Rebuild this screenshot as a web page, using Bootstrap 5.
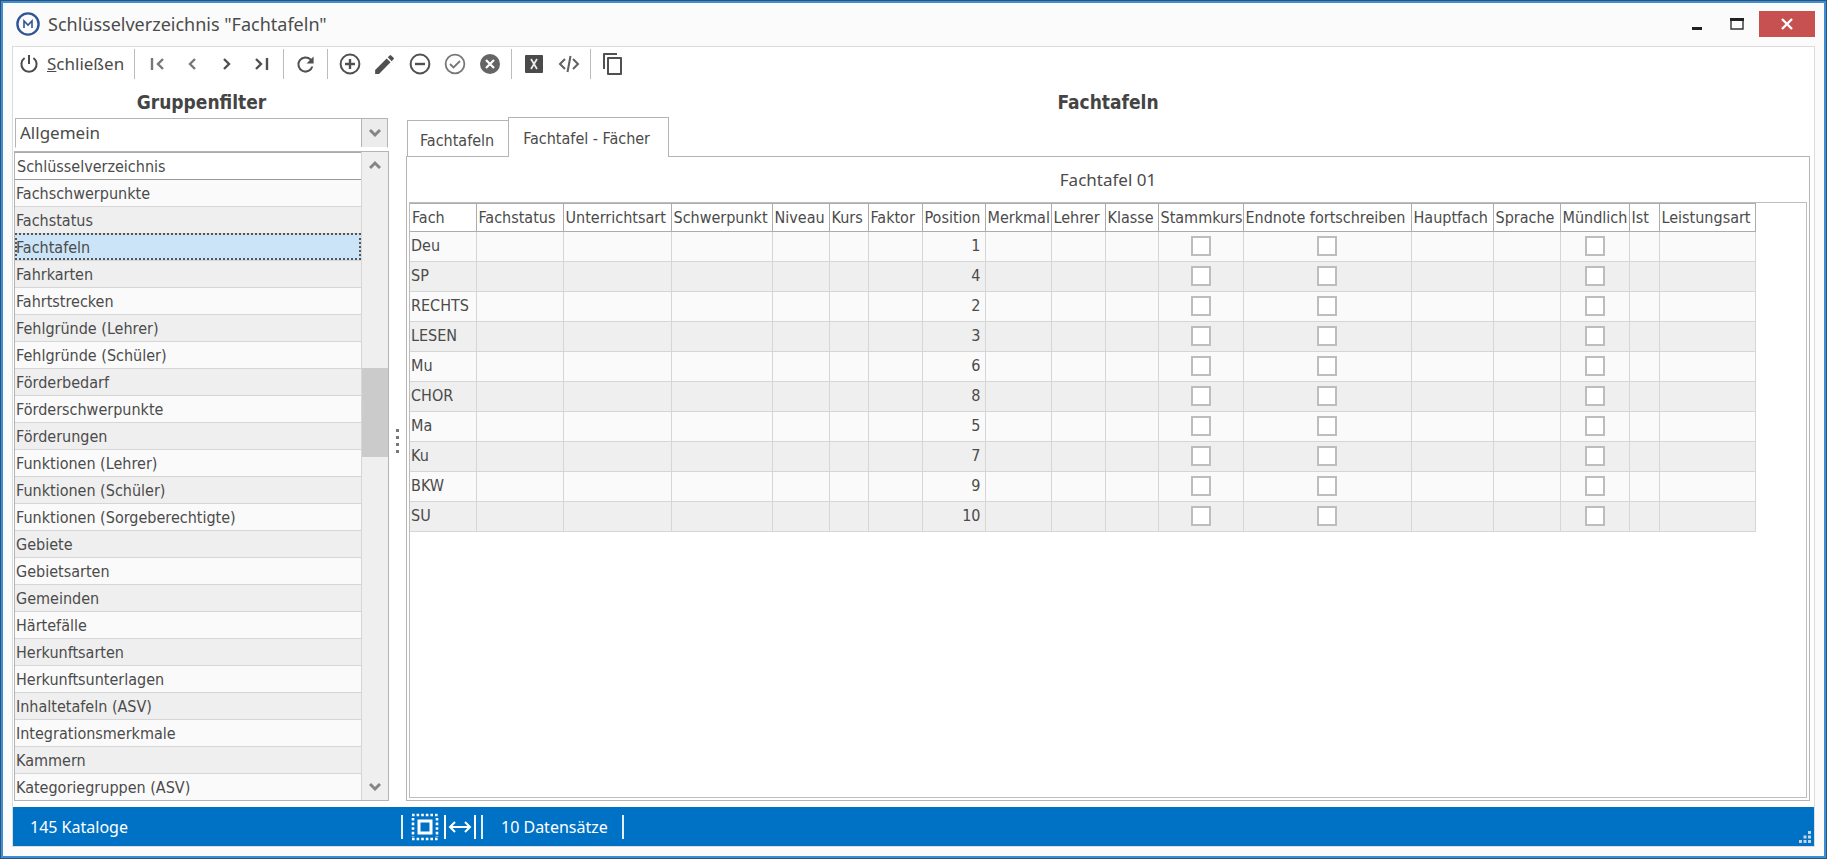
<!DOCTYPE html>
<html lang="de">
<head>
<meta charset="utf-8">
<meta name="viewport" content="width=device-width, initial-scale=1">
<title>Schlüsselverzeichnis "Fachtafeln"</title>
<link href="https://cdn.jsdelivr.net/npm/bootstrap@5.3.0/dist/css/bootstrap.min.css" rel="stylesheet">
<style>
:root{--ui:"Noto Sans","Open Sans",sans-serif;--grid:"DejaVu Sans Condensed","DejaVu Sans",sans-serif;--ink:#4b4b4b;--edge:#b4b4b4;--line:#d6d6d6}
body{font-family:var(--ui);font-size:17px;line-height:24px;color:var(--ink);background:#fbfbfb}
.app-window{border:1px solid #34526b;box-shadow:inset 0 0 0 2px #3a8fdc;padding:0 11px 11px}
.title-bar{height:45px;padding:2px 0 0 4px}
.title-bar h1{font-size:18px;line-height:24px;margin:0 0 0 8px;font-weight:400}
.win-btn{border:0;background:none;width:40px;height:26px;padding:0;display:flex;align-items:center;justify-content:center}
.win-close{background:#c75050;width:56px;margin-left:2px}
.app-body{background:#fff;border:1px solid #dcdcdc;min-height:0}
.tool-bar{height:35px}
.tool-btn{border:0;background:none;width:35px;height:33px;padding:0;display:flex;align-items:center;justify-content:center;color:#505050}
.tool-close{width:auto;padding:0 6px;gap:8px;color:var(--ink)}
.tool-sep{width:1px;height:30px;background:#bcbcbc;margin:0 4px}
.panel-title{font:700 19px/40px var(--grid);text-align:center;margin:0;height:36px;color:#444}
.side-panel{width:376px;flex:none;padding-left:1px}
.combo{height:30px;margin:0 1px;border:1px solid var(--edge);border-bottom-color:#fff;position:relative}
.combo select{width:100%;height:100%;appearance:none;border:0;padding:1px 30px 0 4px;background:#fff;color:var(--ink);font:17px/24px var(--ui)}
.combo .arrow{position:absolute;right:0;top:0;bottom:0;width:26px;border-left:1px solid var(--edge);background:#ececec;pointer-events:none;display:flex;align-items:center;justify-content:center}
.list-frame{border:1px solid var(--edge);margin-top:3px;min-height:0}
.grid{font:16px/20px var(--grid);border-collapse:collapse;color:var(--ink);table-layout:fixed;margin:0}
.grid th{font-weight:400;background:#fff;border:1px solid #acacac;height:28px;padding:2px 0 0 2px;white-space:nowrap;text-align:left}
.grid td{border:1px solid var(--line);padding:0 1px;height:30px;white-space:nowrap;background:#fafafa}
.grid tbody tr:nth-child(even) td{background:#efefef}
.grid tr>*:first-child{border-left:0}
.key-list{width:100%}
.key-list td,.key-list th{height:27px;border-right:0;padding-top:2px}
.key-list th{border-bottom-color:#999}
.key-list tbody tr.chosen td{background:#cce4f7;outline:2px dotted #555;outline-offset:-2px}
.scroll-track{width:27px;flex:none;background:#efefef;border-left:1px solid var(--line)}
.scroll-track button{border:0;background:none;height:26px;padding:0;display:flex;align-items:center;justify-content:center}
.scroll-before{flex:190 0 0}.scroll-thumb{flex:90 0 0;background:#cbcbcb}.scroll-after{flex:317 0 0}
.splitter{width:17px;flex:none}
.splitter i{width:3px;height:3px;background:#777}
.main-panel{min-width:0;padding-right:4px}
.tabs{height:39px;padding-left:1px;margin-bottom:-1px;position:relative}
.tab{font:16px/20px var(--grid);color:var(--ink);background:#fff;border:1px solid var(--edge);height:37px;padding:5px 14px 0 12px}
.tab.on{height:40px;border-bottom:0;margin-left:-1px;padding:3px 18px 0 14px}
.pane{border:1px solid var(--edge);min-height:0;padding:0 2px 2px}
.pane-title{height:45px;line-height:46px;text-align:center}
.grid-frame{border:1px solid #bdbdbd;overflow:hidden}
.grid input{appearance:none;display:block;width:20px;height:20px;border:2px solid #bdbdbd;background:#fff;margin:0 auto;border-radius:0}
.status{background:#0072c6;color:#fff;height:39px;position:relative;margin:6px 0 0;font-size:16px}
.status .bar{width:2px;height:24px;background:#e3effa}
.status .count{width:388px;padding-left:17px}
.status .records{padding:0 14px 0 18px}
.status .grip{position:absolute;right:2px;bottom:2px}
</style>
</head>
<body>
<div class="app-window vh-100 d-flex flex-column">
  <header class="title-bar d-flex align-items-center">
    <svg width="24" height="24" viewBox="0 0 24 24" fill="none" stroke="#2f5597"><circle cx="12" cy="12" r="10.6" stroke-width="2.4"/><path d="M8 16V9l4 4 4-4v7" stroke-width="1.6"/></svg>
    <h1>Schlüsselverzeichnis "Fachtafeln"</h1>
    <div class="d-flex ms-auto">
      <button class="win-btn" aria-label="Minimieren"><svg width="12" height="14"><path d="M1 10h10v3H1z" fill="#222"/></svg></button>
      <button class="win-btn" aria-label="Maximieren"><svg width="14" height="12"><path d="M1 1h12v10H1z" fill="none" stroke="#333" stroke-width="1.4"/><path d="M0 0h14v3H0z" fill="#222"/></svg></button>
      <button class="win-btn win-close" aria-label="Fenster schließen"><svg width="14" height="12" stroke="#fff" stroke-width="2.4"><path d="m2 1 10 10M12 1 2 11"/></svg></button>
    </div>
  </header>
  <div class="app-body flex-grow-1 d-flex flex-column">
    <nav class="tool-bar d-flex align-items-center" aria-label="Werkzeuge">
      <button class="tool-btn tool-close"><svg width="20" height="20" viewBox="0 0 20 20" fill="none" stroke="currentColor" stroke-width="2"><path d="M10 1v9M5.6 4a7.6 7.6 0 1 0 8.8 0"/></svg><span><u>S</u>chließen</span></button>
      <span class="tool-sep"></span>
      <button class="tool-btn" aria-label="Erster"><svg width="16" height="14" fill="none" stroke="#777" stroke-width="2.4"><path d="M3 1v12M14 2 9 7l5 5"/></svg></button>
      <button class="tool-btn" aria-label="Zurück"><svg width="14" height="14" fill="none" stroke="#777" stroke-width="2.4"><path d="M10 2 5 7l5 5"/></svg></button>
      <button class="tool-btn" aria-label="Weiter"><svg width="14" height="14" fill="none" stroke="currentColor" stroke-width="2.4"><path d="m4 2 5 5-5 5"/></svg></button>
      <button class="tool-btn" aria-label="Letzter"><svg width="16" height="14" fill="none" stroke="currentColor" stroke-width="2.4"><path d="m2 2 5 5-5 5M13 1v12"/></svg></button>
      <span class="tool-sep"></span>
      <button class="tool-btn" aria-label="Aktualisieren"><svg width="27" height="27" viewBox="0 0 24 24" fill="currentColor"><path d="M17.65 6.35A8 8 0 1 0 19.73 14h-2.08A6 6 0 1 1 12 6c1.66 0 3.14.69 4.22 1.78L13 11h7V4z" transform="translate(1.2 1.2) scale(.9)"/></svg></button>
      <span class="tool-sep"></span>
      <button class="tool-btn" aria-label="Neu"><svg width="22" height="22" fill="none" stroke="currentColor" stroke-width="2"><circle cx="11" cy="11" r="9.4"/><path d="M11 6v10M6 11h10" stroke-width="2.4"/></svg></button>
      <button class="tool-btn" aria-label="Bearbeiten"><svg width="25" height="25" viewBox="0 0 24 24" fill="currentColor"><path d="M3 17.25V21h3.75L17.81 9.94l-3.75-3.75zM20.71 7.04a1 1 0 0 0 0-1.41l-2.34-2.34a1 1 0 0 0-1.41 0l-1.83 1.83 3.75 3.75z"/></svg></button>
      <button class="tool-btn" aria-label="Löschen"><svg width="22" height="22" fill="none" stroke="currentColor" stroke-width="2"><circle cx="11" cy="11" r="9.4"/><path d="M6 11h10" stroke-width="2.4"/></svg></button>
      <button class="tool-btn" aria-label="Speichern"><svg width="22" height="22" fill="none" stroke="#777" stroke-width="1.8"><circle cx="11" cy="11" r="9.4"/><path d="m6 11 3.5 3.5L16 8"/></svg></button>
      <button class="tool-btn" aria-label="Abbrechen"><svg width="22" height="22"><circle cx="11" cy="11" r="10" fill="#656565"/><path d="m7 7 8 8M15 7l-8 8" stroke="#fff" stroke-width="2.2"/></svg></button>
      <span class="tool-sep"></span>
      <button class="tool-btn" aria-label="Excel-Export"><svg width="18" height="18"><rect width="18" height="18" rx="1" fill="#4a4a4a"/><path d="m6 4 6 10M12 4 6 14" stroke="#eee" stroke-width="1.7"/></svg></button>
      <button class="tool-btn" aria-label="XML-Export"><svg width="22" height="18" fill="none" stroke="#606060" stroke-width="2"><path d="M7 4 2 9l5 5M15 4l5 5-5 5M12.500 1 9.500 17"/></svg></button>
      <span class="tool-sep"></span>
      <button class="tool-btn" aria-label="Kopieren"><svg width="22" height="24" fill="none" stroke="currentColor" stroke-width="2"><path d="M2 17V2h13M6 6h13v16H6z" stroke-linejoin="round"/></svg></button>
    </nav>
    <div class="d-flex flex-grow-1" style="min-height:0">
      <section class="side-panel d-flex flex-column">
        <h2 class="panel-title"><label for="group">Gruppenfilter</label></h2>
        <div class="combo"><select id="group"><option>Allgemein</option></select><span class="arrow"><svg width="12" height="10" fill="none" stroke="#858585" stroke-width="3"><path d="m1 2 5 5 5-5"/></svg></span></div>
        <div class="list-frame d-flex flex-grow-1">
          <div class="flex-grow-1 overflow-hidden"><table class="grid key-list"><thead><tr><th>Schlüsselverzeichnis</th></tr></thead><tbody id="keys"></tbody></table></div>
          <div class="scroll-track d-flex flex-column">
            <button aria-label="Nach oben"><svg width="12" height="10" fill="none" stroke="#858585" stroke-width="3"><path d="m1 8 5-5 5 5"/></svg></button>
            <div class="scroll-before"></div><div class="scroll-thumb"></div><div class="scroll-after"></div>
            <button aria-label="Nach unten"><svg width="12" height="10" fill="none" stroke="#858585" stroke-width="3"><path d="m1 2 5 5 5-5"/></svg></button>
          </div>
        </div>
      </section>
      <div class="splitter d-flex flex-column align-items-center justify-content-center"><i></i><i class="mt-1"></i><i class="mt-1"></i><i class="mt-1"></i></div>
      <section class="main-panel flex-grow-1 d-flex flex-column">
        <h2 class="panel-title">Fachtafeln</h2>
        <div class="tabs d-flex align-items-end" role="tablist">
          <button class="tab" role="tab" aria-selected="false">Fachtafeln</button>
          <button class="tab on" role="tab" aria-selected="true">Fachtafel - Fächer</button>
        </div>
        <div class="pane flex-grow-1 d-flex flex-column">
          <div class="pane-title">Fachtafel 01</div>
          <div class="grid-frame flex-grow-1"><table class="grid" id="subjects"></table></div>
        </div>
      </section>
    </div>
    <footer class="status d-flex align-items-center">
      <span class="count">145 Kataloge</span>
      <span class="bar"></span>
      <svg class="ms-2" width="28" height="28" fill="none" stroke="#fff"><path d="M1 2h27M1 26h27" stroke-width="2.600" stroke-dasharray="2.600 2"/><path d="M2 5v19M26 5v19" stroke-width="2.600" stroke-dasharray="2.600 2"/><path d="M8 8h12v12H8z" stroke-width="3"/></svg>
      <svg class="ms-1" width="34" height="26" fill="none" stroke="#fff" stroke-width="2"><path d="M2 1v24M32 1v24M7 13h20M12 8l-5 5 5 5M22 8l5 5-5 5"/></svg>
      <span class="bar ms-1"></span>
      <span class="records">10 Datensätze</span>
      <span class="bar"></span>
      <svg class="grip" width="14" height="14" fill="#c9d4dd"><path d="M10 1h3v3h-3zM10 5.500h3v3h-3zM5.500 5.500h3v3h-3zM10 10h3v3h-3zM5.500 10h3v3h-3zM1 10h3v3H1z"/></svg>
    </footer>
  </div>
</div>
<script>
const keys = ["Fachschwerpunkte","Fachstatus","Fachtafeln","Fahrkarten","Fahrtstrecken","Fehlgründe (Lehrer)","Fehlgründe (Schüler)","Förderbedarf","Förderschwerpunkte","Förderungen","Funktionen (Lehrer)","Funktionen (Schüler)","Funktionen (Sorgeberechtigte)","Gebiete","Gebietsarten","Gemeinden","Härtefälle","Herkunftsarten","Herkunftsunterlagen","Inhaltetafeln (ASV)","Integrationsmerkmale","Kammern","Kategoriegruppen (ASV)"];
document.getElementById("keys").innerHTML = keys.map(k => `<tr${k === "Fachtafeln" ? ' class="chosen"' : ""}><td>${k}</td></tr>`).join("");

const cols = [["Fach",66],["Fachstatus",87],["Unterrichtsart",108],["Schwerpunkt",101],["Niveau",57],["Kurs",39],["Faktor",54],["Position",63],["Merkmal",66],["Lehrer",54],["Klasse",53],["Stammkurs",85],["Endnote fortschreiben",168],["Hauptfach",82],["Sprache",67],["Mündlich",69],["Ist",30],["Leistungsart",96]];
const rows = [["Deu",1],["SP",4],["RECHTS",2],["LESEN",3],["Mu",6],["CHOR",8],["Ma",5],["Ku",7],["BKW",9],["SU",10]];
const flags = ["Stammkurs","Endnote fortschreiben","Mündlich"];
const table = document.getElementById("subjects");
table.style.width = cols.reduce((sum, c) => sum + c[1], 0) + "px";
table.innerHTML = `<colgroup>${cols.map(c => `<col style="width:${c[1]}px">`).join("")}</colgroup>
<thead><tr>${cols.map(c => `<th>${c[0]}</th>`).join("")}</tr></thead>
<tbody>${rows.map(([name, pos]) => `<tr>${cols.map(([c]) =>
  c === "Fach" ? `<td>${name}</td>` :
  c === "Position" ? `<td class="text-end pe-1">${pos}</td>` :
  flags.includes(c) ? `<td><input type="checkbox" aria-label="${name}: ${c}"></td>` : "<td></td>").join("")}</tr>`).join("")}</tbody>`;
</script>
<script src="https://cdn.jsdelivr.net/npm/bootstrap@5.3.0/dist/js/bootstrap.bundle.min.js"></script>
</body>
</html>
